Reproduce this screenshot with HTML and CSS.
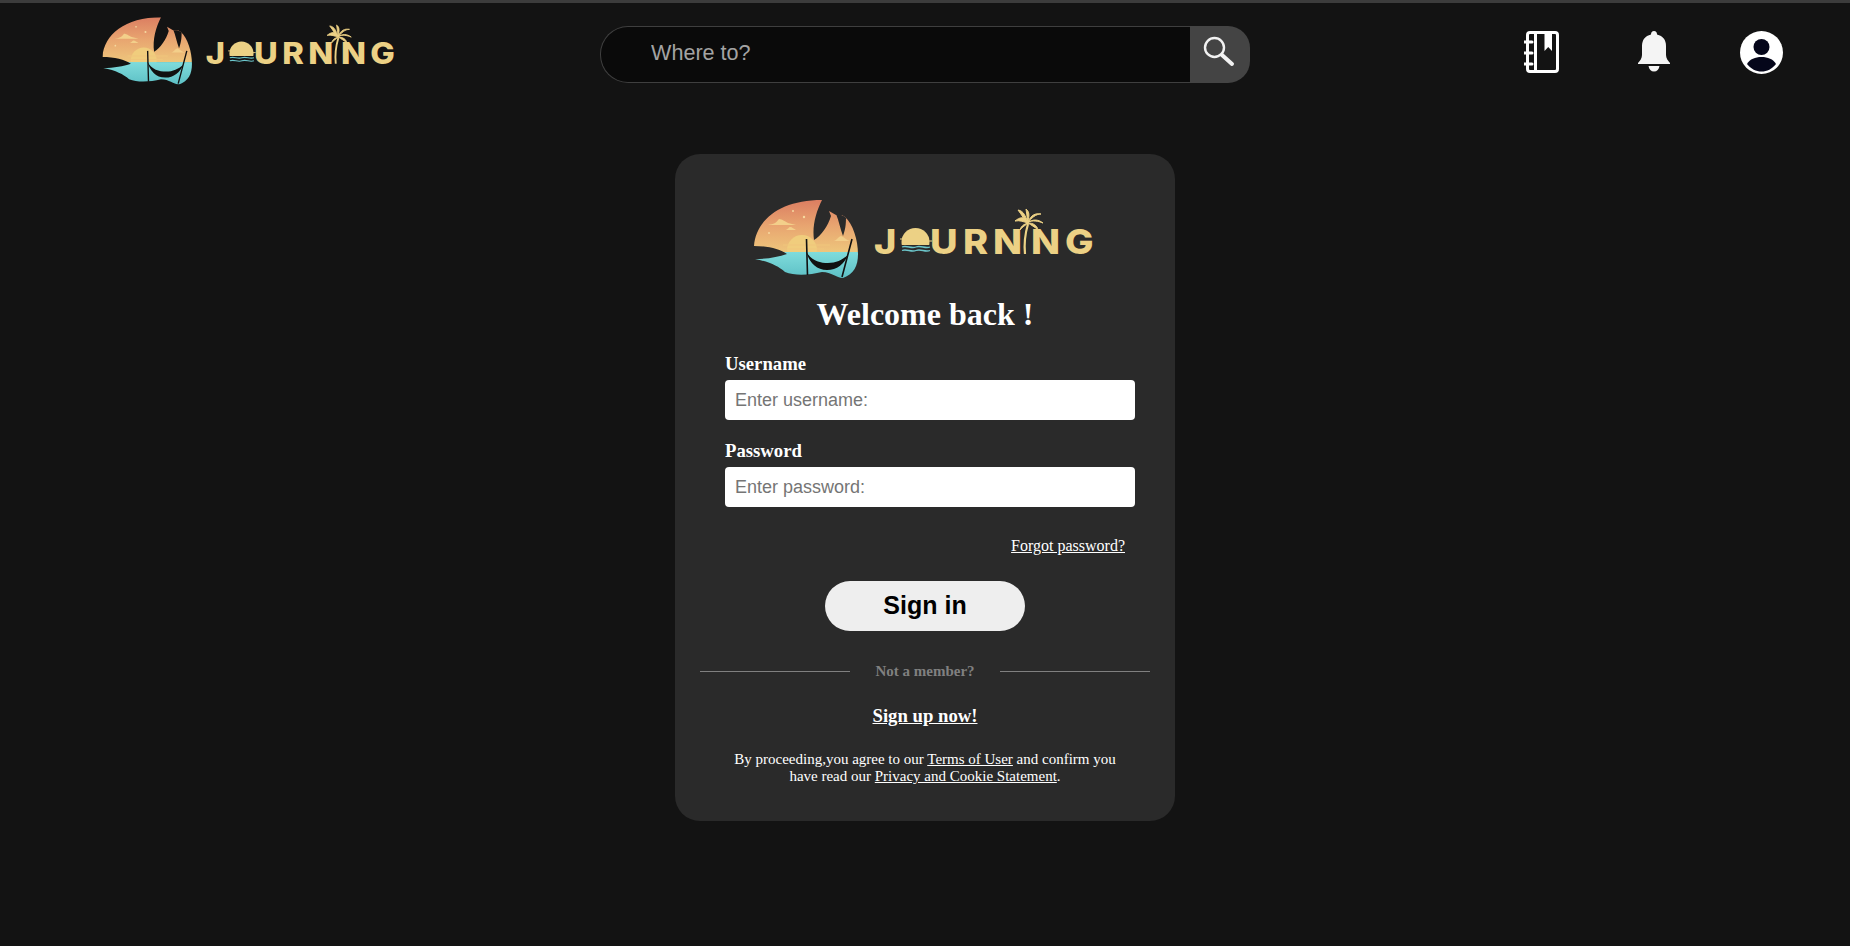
FILE: index.html
```html
<!DOCTYPE html>
<html lang="en">
<head>
<meta charset="utf-8">
<title>Journing - Sign in</title>
<link rel="stylesheet" href="styles.css">
</head>
<body>
<svg class="defs" width="0" height="0" aria-hidden="true">
  <defs>
    <linearGradient id="sky" x1="0" y1="0" x2="0" y2="1">
      <stop offset="0" stop-color="#d9755e"/>
      <stop offset=".55" stop-color="#e8a570"/>
      <stop offset="1" stop-color="#eec67c"/>
    </linearGradient>
    <linearGradient id="sea" x1="0" y1="0" x2="0" y2="1">
      <stop offset="0" stop-color="#7fdcdc"/>
      <stop offset="1" stop-color="#58bcc2"/>
    </linearGradient>
    <clipPath id="mark">
      <path d="M4 52C6 26 30 6 72 6C66 18 62 32 64 46C71 42 78 32 81 22L79 17L86 21L92 21L95 23C103 30 108 46 108 60C108 72 104 80 93 84C86 84 82 78 72 78C60 81 45 82 35 78C28 72 20 68 5 65C18 65 28 63 37 60C30 55 18 52 4 52Z"/>
    </clipPath>
    <clipPath id="dome"><rect x="148" y="30" width="36" height="21"/></clipPath>
    <symbol id="logo" viewBox="0 0 345 88">
      <g clip-path="url(#mark)">
        <rect x="0" y="0" width="115" height="58" fill="url(#sky)"/>
        <circle cx="52" cy="56" r="15" fill="#f0cd7d"/>
        <path d="M18 31C24 30 26 29 29 25C32 25 36 28 38 29L46 31Z" fill="#f3cf8a"/>
        <path d="M36 36C38 35 39 33 40 33C42 33 44 35 46 36Z" fill="#f3cf8a"/>
        <path d="M84 47C87 46 88 43 91 42C94 43 96 46 100 47Z" fill="#f3cf8a"/>
        <path d="M33 51H80M37 55H74" stroke="#efc67c" stroke-width="1.2"/>
        <circle cx="43" cy="17" r="1" fill="#f6d9a0"/>
        <circle cx="54" cy="23" r="1.2" fill="#f6d9a0"/>
        <circle cx="19" cy="39" r="1" fill="#f6d9a0"/>
        <rect x="0" y="58" width="115" height="30" fill="url(#sea)"/>
        <path d="M86 20C89 27 90 34 93 42C96 34 96 28 96 22Z" class="logo-cut"/>
      </g>
      <path d="M56.500 45L57.500 81M102 45L92 83" class="logo-pole"/>
      <path d="M56 57C61 67 70 69 78 69C86 69 92 66 98 61C94 70 87 76 77 76C66 76 59 68 56 57Z" class="logo-hammock"/>
      <text class="logo-text" transform="scale(1.1 1)" x="112.700 163.600 193.600 220.900 255.500 286.400" y="60">JURNNG</text>
      <g clip-path="url(#dome)"><circle cx="165.500" cy="48" r="14" class="logo-gold"/></g>
      <path d="M150 45H154M177 47H182" class="logo-dash"/>
      <path d="M152 53C157 51 161 55 166 53C171 51 175 55 180 53M152 56.500C157 54.500 161 58.500 166 56.500C171 54.500 175 58.500 180 56.500" class="logo-wave"/>
      <path d="M275 60C274 50 275 40 278 30" class="logo-trunk"/>
      <path d="M278 28C274 22 270 23 265 27C270 26 274 28 278 29ZM278 28C275 22 274 17 268 16C272 21 274 26 278 29ZM278 28C279 22 280 18 276 15C277 20 277 24 278 29ZM278 28C281 21 285 19 291 20C286 20 281 24 278 29ZM278 28C283 26 288 27 293 29C288 25 282 25 278 29ZM278 29C283 29 287 31 288 36C285 33 281 31 278 29ZM278 29C274 30 271 32 270 36C272 33 276 31 278 29Z" class="logo-leaves"/>
    </symbol>
  </defs>
</svg>

<header class="topbar">
  <a class="brand" href="#"><svg class="logo-small"><use href="#logo"/></svg></a>
  <form class="search">
    <input class="search-input" type="text" placeholder="Where to?">
    <button class="search-btn" type="button" aria-label="Search">
      <svg width="34" height="34" viewBox="0 0 34 34">
        <circle cx="12.500" cy="12.500" r="9.500" class="icon-ring"/>
        <path d="M20 20L30 29" class="icon-handle"/>
      </svg>
    </button>
  </form>
  <nav class="icons">
    <svg class="icon-book" width="36" height="44" viewBox="0 0 36 44">
      <rect x="3.500" y="2.500" width="30" height="39" rx="2.500" class="book-line"/>
      <path d="M11.500 2V42" class="book-line"/>
      <path d="M20.500 2H28V21L24.250 17L20.500 21Z" class="book-fill"/>
      <path d="M0.500 12H8M0.500 23H8M0.500 34H8" class="book-ring"/>
    </svg>
    <svg class="icon-bell" width="32" height="41" viewBox="0 0 32 41">
      <path d="M16 0C18 0 19 1.500 19 3.500C25 5 28 9 28 15V24C28 27 30 30 32 32V33H0V32C2 30 4 27 4 24V15C4 9 7 5 13 3.500C13 1.500 14 0 16 0Z" class="bell-fill"/>
      <path d="M10.500 35H21.500C21 38.500 19 40.500 16 40.500C13 40.500 11 38.500 10.500 35Z" class="bell-fill"/>
    </svg>
    <svg class="icon-user" width="43" height="43" viewBox="0 0 43 43">
      <circle cx="21.500" cy="21.500" r="21.500" class="user-bg"/>
      <circle cx="21.500" cy="16" r="8" class="user-fg"/>
      <path d="M7 33C10 28 15 26 21.500 26C28 26 33 28 36 33C32 38 27 40.500 21.500 40.500C16 40.500 11 38 7 33Z" class="user-fg"/>
    </svg>
  </nav>
</header>

<main class="card">
  <svg class="logo-large"><use href="#logo"/></svg>
  <h1 class="title">Welcome back !</h1>
  <form class="login">
    <label class="field-label" for="username">Username</label>
    <input class="field" id="username" type="text" placeholder="Enter username:">
    <label class="field-label" for="password">Password</label>
    <input class="field" id="password" type="password" placeholder="Enter password:">
    <a class="forgot" href="#">Forgot password?</a>
  </form>
  <button class="signin" type="button">Sign in</button>
  <div class="divider"><span class="divider-line"></span><span class="divider-text">Not a member?</span><span class="divider-line"></span></div>
  <a class="signup" href="#">Sign up now!</a>
  <p class="terms">By proceeding,you agree to our <a href="#">Terms of User</a> and confirm you have read our <a href="#">Privacy and Cookie Statement</a>.</p>
</main>
</body>
</html>
```
FILE: styles.css
```css
* { box-sizing: border-box; }

html, body { height: 100%; }

body {
  margin: 0;
  background: #131313;
  color: #fff;
  font-family: "Liberation Serif", serif;
  border-top: 3px solid #3c3c3c;
  overflow: hidden;
}

.defs { display: block; height: 0; }

a { color: #fff; }

.topbar {
  display: grid;
  grid-template-columns: 1fr 650px 1fr;
  align-items: start;
  height: 151px;
  padding-top: 23px;
}

.brand { display: block; margin: -14px 0 0 99px; width: 297px; height: 76px; }

.logo-small { display: block; width: 297px; height: 76px; --cut: #131313; }

.logo-large { display: block; width: 345px; height: 88px; margin: 0 6px 0 0; --cut: #2a2a2a; }

.logo-cut { fill: var(--cut); }
.logo-pole { fill: none; stroke: #111; stroke-width: 1.600; }
.logo-hammock { fill: #111; }
.logo-text { font-family: Inter, "Liberation Sans", sans-serif; font-weight: 800; font-size: 34.500px; fill: #ecd185; }
.logo-gold { fill: #ecd185; }
.logo-dash { fill: none; stroke: #ecd185; stroke-width: 1; }
.logo-wave { fill: none; stroke: #6cc6cb; stroke-width: 1.300; }
.logo-trunk { fill: none; stroke: #ecd185; stroke-width: 2.200; }
.logo-leaves { fill: #ecd185; stroke: #ecd185; stroke-width: 1; }

.search { display: flex; width: 650px; height: 57px; }

.search-input {
  flex: 1;
  min-width: 0;
  height: 57px;
  padding: 0 0 4px 50px;
  background: #0a0a0a;
  border: 1px solid #3f3f3f;
  border-right: 0;
  border-radius: 28px 0 0 28px;
  color: #fff;
  font-family: "Liberation Sans", sans-serif;
  font-size: 21.6px;
  outline: 0;
}

.search-input::placeholder { color: #a3a3a3; opacity: 1; }

.search-btn {
  display: flex;
  align-items: center;
  justify-content: center;
  width: 60px;
  height: 57px;
  padding: 0 3px 5px 0;
  background: #444;
  border: 0;
  border-radius: 0 22px 22px 0;
}

.icon-ring { fill: none; stroke: #f2f2f2; stroke-width: 2.400; }
.icon-handle { fill: none; stroke: #f2f2f2; stroke-width: 4; stroke-linecap: round; }

.icons { display: flex; align-items: flex-start; justify-content: flex-end; padding: 4px 67px 0 0; }

.icon-book { display: block; }
.icon-bell { display: block; margin: 1px 0 0 78px; }
.icon-user { display: block; margin: 1px 0 0 70px; }

.book-line { fill: none; stroke: #fff; stroke-width: 3; }
.book-fill { fill: #fff; }
.book-ring { fill: none; stroke: #fff; stroke-width: 3; stroke-linecap: round; }
.bell-fill { fill: #f4f4f4; }
.user-bg { fill: #fff; }
.user-fg { fill: #05061a; }

.card {
  display: flex;
  flex-direction: column;
  align-items: center;
  width: 500px;
  height: 667px;
  margin: 0 auto;
  padding: 40px 25px 0;
  background: #2a2a2a;
  border-radius: 25px;
}

.title {
  margin: 14px 0 0;
  font-size: 32px;
  line-height: 37px;
  font-weight: 700;
  text-align: center;
}

.login { display: flex; flex-direction: column; width: 410px; margin: 20px 0 0 10px; }

.field-label { font-size: 18.720px; font-weight: 700; line-height: 22px; }

.field {
  width: 410px;
  height: 40px;
  margin: 5px 0 20px;
  padding: 0 10px;
  background: #fff;
  border: 0;
  border-radius: 4px;
  font-family: "Liberation Sans", sans-serif;
  font-size: 18px;
  outline: 0;
}

.field::placeholder { color: #757575; opacity: 1; }

.forgot { align-self: flex-end; margin: 10px 10px 0 0; font-size: 16px; line-height: 18px; }

.signin {
  width: 200px;
  height: 50px;
  margin-top: 26px;
  padding: 0 0 2px;
  background: #eee;
  border: 0;
  border-radius: 25px;
  color: #000;
  font-family: "Liberation Sans", sans-serif;
  font-size: 25px;
  font-weight: 700;
}

.divider { display: flex; align-items: center; width: 450px; margin-top: 32px; }
.divider-line { flex: 0 0 150px; height: 1px; background: #808080; }
.divider-text { flex: 1; color: #808080; font-size: 15px; font-weight: 700; line-height: 17px; text-align: center; }

.signup { margin-top: 25px; font-size: 18.720px; font-weight: 700; line-height: 22px; }

.terms { width: 400px; margin: 24px 0 0; font-size: 15px; line-height: normal; text-align: center; }
```
